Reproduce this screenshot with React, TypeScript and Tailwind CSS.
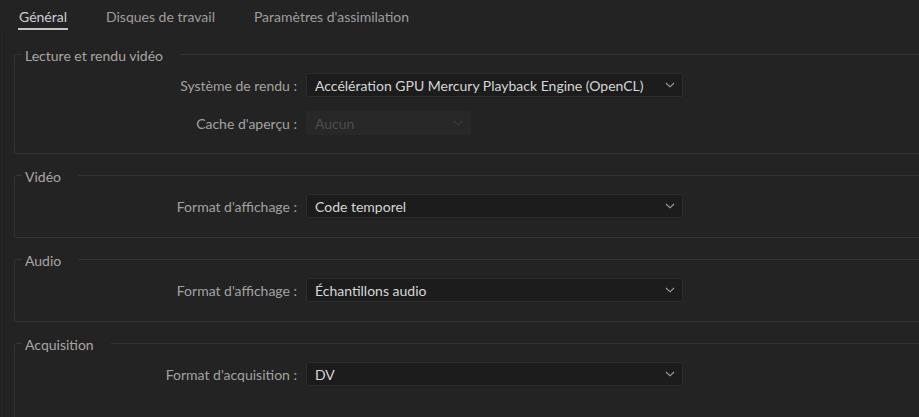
import React from "react";

type Row = { label: string; value: string; disabled?: boolean };

const groups: { title: string; rows: Row[] }[] = [
  {
    title: "Lecture et rendu vidéo",
    rows: [
      { label: "Système de rendu :", value: "Accélération GPU Mercury Playback Engine (OpenCL)" },
      { label: "Cache d'aperçu :", value: "Aucun", disabled: true },
    ],
  },
  { title: "Vidéo", rows: [{ label: "Format d'affichage :", value: "Code temporel" }] },
  { title: "Audio", rows: [{ label: "Format d'affichage :", value: "Échantillons audio" }] },
  { title: "Acquisition", rows: [{ label: "Format d'acquisition :", value: "DV" }] },
];

const tabs = ["Général", "Disques de travail", "Paramètres d'assimilation"];

function Chevron({ dim }: { dim?: boolean }) {
  return (
    <svg width="10" height="6" viewBox="0 0 10 6" className="shrink-0">
      <path
        d="M1 1 L5 4.8 L9 1"
        fill="none"
        stroke={dim ? "#3c3c3c" : "#a0a0a0"}
        strokeWidth="1.1"
      />
    </svg>
  );
}

function Select({ value, disabled }: { value: string; disabled?: boolean }) {
  if (disabled) {
    return (
      <div className="flex h-[24px] w-[165px] items-center justify-between rounded-[2px] bg-[#282828] pl-[9px] pr-[8px] text-[#4c4c4c]">
        <span>{value}</span>
        <Chevron dim />
      </div>
    );
  }
  return (
    <div className="flex h-[24px] w-[377px] items-center justify-between rounded-[2px] border border-[#2c2c2c] bg-[#1c1c1c] pl-[8px] pr-[7px] text-[#d6d6d6]">
      <span>{value}</span>
      <Chevron />
    </div>
  );
}

function Group({ title, rows, last }: { title: string; rows: Row[]; last?: boolean }) {
  return (
    <div className="ml-[9px]">
      {/* header line with legend */}
      <div className="flex h-[20px]">
        <div className="mt-[8px] w-[8px] rounded-tl-[3px] border-l border-t border-[#333333]" />
        <span className="pl-[3px] pr-[17px] leading-[20px] text-[#a6a6a6]">{title}</span>
        <div className="mt-[8px] flex-1 border-t border-[#333333]" />
      </div>
      <div
        className={
          "flex flex-col gap-[14px] border-l border-[#333333] pt-[7px] " +
          (last
            ? "pb-[40px]"
            : "rounded-bl-[3px] border-b " + (rows.length > 1 ? "pb-[18px]" : "pb-[19px]"))
        }
      >
        {rows.map((r) => (
          <div key={r.label} className="flex items-center gap-[9px]">
            <div className="w-[282px] text-right text-[#a2a2a2]">{r.label}</div>
            <Select value={r.value} disabled={r.disabled} />
          </div>
        ))}
      </div>
    </div>
  );
}

export default function App() {
  return (
    <div
      className="h-[417px] w-full overflow-hidden bg-[#232323] text-[14px]"
      style={{ fontFamily: "Lato, 'Noto Sans', sans-serif" }}
    >
      {/* Tabs */}
      <div className="flex h-[30px] gap-[37px] pl-[18px]">
        {tabs.map((t, i) => (
          <div key={t} className="flex flex-col pt-[7px]">
            <span
              className={
                "px-[1px] leading-[20px] " + (i === 0 ? "text-[#cfcfcf]" : "text-[#9e9e9e]")
              }
            >
              {t}
            </span>
            <div className={"mt-[1px] h-[2px] " + (i === 0 ? "bg-[#c4c4c4]" : "")} />
          </div>
        ))}
      </div>

      {/* Groups */}
      <div className="ml-[4px] flex flex-col gap-[13px] border-l border-[#1d1d1d] pt-[16px]">
        {groups.map((g, gi) => (
          <Group key={g.title} title={g.title} rows={g.rows} last={gi === groups.length - 1} />
        ))}
      </div>
    </div>
  );
}
